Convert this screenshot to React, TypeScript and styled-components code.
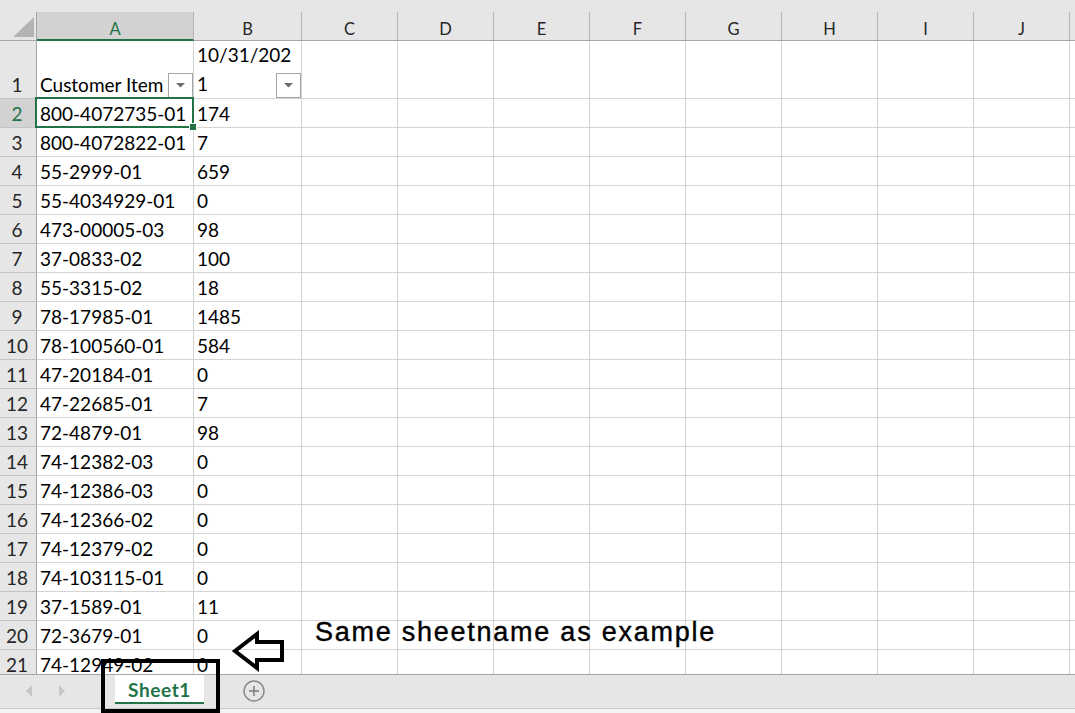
import React from 'react';
import styled, { createGlobalStyle } from 'styled-components';

const GREEN = '#217346';

const Global = createGlobalStyle`
  html, body { margin: 0; padding: 0; background: #ffffff; overflow: hidden; }
  #root { width: 1075px; height: 713px; }
`;

const Window = styled.div`
  position: relative;
  width: 1075px;
  height: 713px;
  display: flex;
  flex-direction: column;
  overflow: hidden;
  background: #ffffff;
  font-family: Lato, "Open Sans", sans-serif;
`;

const TopStrip = styled.div`
  flex: none;
  height: 12px;
  background: #e6e6e6;
`;

const Sheet = styled.div`
  flex: none;
  height: 662px;
  overflow: hidden;
  display: grid;
  grid-template-columns: 37px 157px 108px repeat(8, 96px) 1fr;
  grid-template-rows: 29px 58px repeat(20, 29px);
`;

const Corner = styled.div`
  box-sizing: border-box;
  background: #e6e6e6;
  border-right: 1px solid #a6a6a6;
  border-bottom: 1px solid #a6a6a6;
  display: flex;
  align-items: flex-end;
  justify-content: flex-end;
  padding: 0 2px 3px 0;
`;

const CornerTriangle = styled.span`
  width: 21px;
  height: 20px;
  background: #b4b4b4;
  clip-path: polygon(100% 0, 100% 100%, 0 100%);
`;

const ColHeader = styled.div<{ $selected?: boolean }>`
  box-sizing: border-box;
  background: ${(p) => (p.$selected ? '#d2d2d2' : '#e6e6e6')};
  border-right: 1px solid #b4b4b4;
  border-bottom: ${(p) => (p.$selected ? `2px solid ${GREEN}` : '1px solid #a6a6a6')};
  color: ${(p) => (p.$selected ? GREEN : '#262626')};
  font-size: 16.5px;
  line-height: 26px;
  padding-top: 4px;
  text-align: center;
  overflow: hidden;
`;

const RowHeader = styled.div<{ $selected?: boolean }>`
  box-sizing: border-box;
  background: ${(p) => (p.$selected ? '#d2d2d2' : '#e6e6e6')};
  border-right: 1px solid #a6a6a6;
  border-bottom: 1px solid #c4c4c4;
  color: ${(p) => (p.$selected ? GREEN : '#262626')};
  font-size: 19px;
  line-height: 26px;
  display: flex;
  align-items: flex-end;
  justify-content: center;
  padding-right: 2px;
`;

const Cell = styled.div<{ $active?: boolean }>`
  position: relative;
  box-sizing: border-box;
  border-right: 1px solid #d4d4d4;
  border-bottom: 1px solid #d4d4d4;
  padding: 0 3px;
  font-size: 19px;
  line-height: 26px;
  color: #000000;
  white-space: nowrap;
  overflow: ${(p) => (p.$active ? 'visible' : 'hidden')};
  display: flex;
  align-items: flex-end;
  z-index: ${(p) => (p.$active ? 2 : 'auto')};
`;

const CellText = styled.span`
  flex: 1;
  min-width: 0;
  overflow: hidden;
  white-space: nowrap;
`;

const WrappedText = styled.span`
  flex: 1;
  min-width: 0;
  display: flex;
  flex-direction: column;
  line-height: 28.5px;
`;

const FilterButton = styled.span`
  flex: none;
  align-self: flex-end;
  box-sizing: border-box;
  width: 25px;
  height: 25px;
  margin-right: -3px;
  border: 1px solid #a6a6a6;
  background: #ffffff;
  display: flex;
  align-items: center;
  justify-content: center;
`;

const Selection = styled.span`
  position: absolute;
  top: -2px;
  left: -2px;
  right: -1px;
  bottom: -1px;
  border: 2px solid ${GREEN};
  pointer-events: none;
`;

const FillHandle = styled.span`
  position: absolute;
  right: -5px;
  bottom: -5px;
  width: 6px;
  height: 6px;
  background: ${GREEN};
  border: 1px solid #ffffff;
`;

const TabBar = styled.div`
  flex: none;
  box-sizing: border-box;
  height: 34px;
  border-top: 1px solid #a6a6a6;
  background: #e6e6e6;
  display: flex;
  align-items: flex-start;
`;

const NavArea = styled.div`
  flex: none;
  box-sizing: border-box;
  width: 115px;
  height: 31px;
  padding-left: 12px;
  display: flex;
  align-items: center;
`;

const NavButton = styled.span`
  width: 33px;
  height: 31px;
  display: flex;
  align-items: center;
  justify-content: center;
`;

const SheetTab = styled.div`
  flex: none;
  box-sizing: border-box;
  width: 89px;
  height: 29px;
  background: #ffffff;
  border-bottom: 2px solid ${GREEN};
  display: flex;
  align-items: center;
  justify-content: center;
  color: ${GREEN};
  font-weight: 700;
  font-size: 19px;
  letter-spacing: 0.6px;
  padding-top: 1px;
`;

const AddSheet = styled.span`
  flex: none;
  margin-left: 39px;
  margin-top: 5px;
  width: 22px;
  height: 22px;
  display: flex;
`;

const Footer = styled.div`
  flex: none;
  box-sizing: border-box;
  height: 5px;
  border-top: 1px solid #c8c8c8;
  background: #f3f3f3;
`;

const CalloutBox = styled.div`
  position: absolute;
  left: 101px;
  top: 659px;
  width: 119px;
  height: 54px;
  box-sizing: border-box;
  border: 4px solid #000000;
  pointer-events: none;
`;

const CalloutArrow = styled.svg`
  position: absolute;
  left: 228px;
  top: 626px;
  width: 62px;
  height: 50px;
`;

const CalloutText = styled.div`
  position: absolute;
  left: 315px;
  top: 618px;
  font-family: "Liberation Sans", Arial, sans-serif;
  font-size: 27px;
  line-height: 28px;
  letter-spacing: 1.75px;
  color: #000000;
  -webkit-text-stroke: 0.4px #000000;
  white-space: nowrap;
`;

const COLUMNS = ['A', 'B', 'C', 'D', 'E', 'F', 'G', 'H', 'I', 'J', ''];

const DATA: [string, string][] = [
  ['800-4072735-01', '174'],
  ['800-4072822-01', '7'],
  ['55-2999-01', '659'],
  ['55-4034929-01', '0'],
  ['473-00005-03', '98'],
  ['37-0833-02', '100'],
  ['55-3315-02', '18'],
  ['78-17985-01', '1485'],
  ['78-100560-01', '584'],
  ['47-20184-01', '0'],
  ['47-22685-01', '7'],
  ['72-4879-01', '98'],
  ['74-12382-03', '0'],
  ['74-12386-03', '0'],
  ['74-12366-02', '0'],
  ['74-12379-02', '0'],
  ['74-103115-01', '0'],
  ['37-1589-01', '11'],
  ['72-3679-01', '0'],
  ['74-12949-02', '0'],
];

const DropArrow = () => (
  <svg width="9" height="5" viewBox="0 0 9 5">
    <path d="M0 0 H9 L4.5 4.5 Z" fill="#6e6e6e" />
  </svg>
);

const EmptyCells = ({ count, prefix }: { count: number; prefix: string }) => (
  <>
    {Array.from({ length: count }, (_, i) => (
      <Cell key={`${prefix}-${i}`} />
    ))}
  </>
);

export default function App() {
  return (
    <Window>
      <Global />
      <TopStrip />
      <Sheet>
        <Corner>
          <CornerTriangle />
        </Corner>
        {COLUMNS.map((c, i) => (
          <ColHeader key={`h-${i}`} $selected={c === 'A'}>
            {c}
          </ColHeader>
        ))}

        <RowHeader>1</RowHeader>
        <Cell>
          <CellText>Customer Item</CellText>
          <FilterButton>
            <DropArrow />
          </FilterButton>
        </Cell>
        <Cell>
          <WrappedText>
            <span>10/31/202</span>
            <span>1</span>
          </WrappedText>
          <FilterButton>
            <DropArrow />
          </FilterButton>
        </Cell>
        <EmptyCells count={9} prefix="r1" />

        {DATA.map(([item, qty], i) => {
          const row = i + 2;
          const active = row === 2;
          return (
            <React.Fragment key={`r-${row}`}>
              <RowHeader $selected={active}>{row}</RowHeader>
              <Cell $active={active}>
                <CellText>{item}</CellText>
                {active && (
                  <Selection>
                    <FillHandle />
                  </Selection>
                )}
              </Cell>
              <Cell>
                <CellText>{qty}</CellText>
              </Cell>
              <EmptyCells count={9} prefix={`r${row}`} />
            </React.Fragment>
          );
        })}
      </Sheet>

      <TabBar>
        <NavArea>
          <NavButton>
            <svg width="6" height="12" viewBox="0 0 6 12">
              <path d="M6 0 V12 L0 6 Z" fill="#c6c6c6" />
            </svg>
          </NavButton>
          <NavButton>
            <svg width="6" height="12" viewBox="0 0 6 12">
              <path d="M0 0 V12 L6 6 Z" fill="#c6c6c6" />
            </svg>
          </NavButton>
        </NavArea>
        <SheetTab>Sheet1</SheetTab>
        <AddSheet>
          <svg width="22" height="22" viewBox="0 0 22 22">
            <circle cx="11" cy="11" r="10" fill="none" stroke="#8a8a8a" strokeWidth="1.5" />
            <path d="M6 11 H16 M11 6 V16" stroke="#7a7a7a" strokeWidth="1.5" />
          </svg>
        </AddSheet>
      </TabBar>
      <Footer />

      <CalloutBox />
      <CalloutArrow viewBox="0 0 62 50">
        <path
          d="M7 25 L29 8 L29 16 L54 16 L54 34 L29 34 L29 42 Z"
          fill="none"
          stroke="#000000"
          strokeWidth="4"
          strokeLinejoin="miter"
        />
      </CalloutArrow>
      <CalloutText>Same sheetname as example</CalloutText>
    </Window>
  );
}
